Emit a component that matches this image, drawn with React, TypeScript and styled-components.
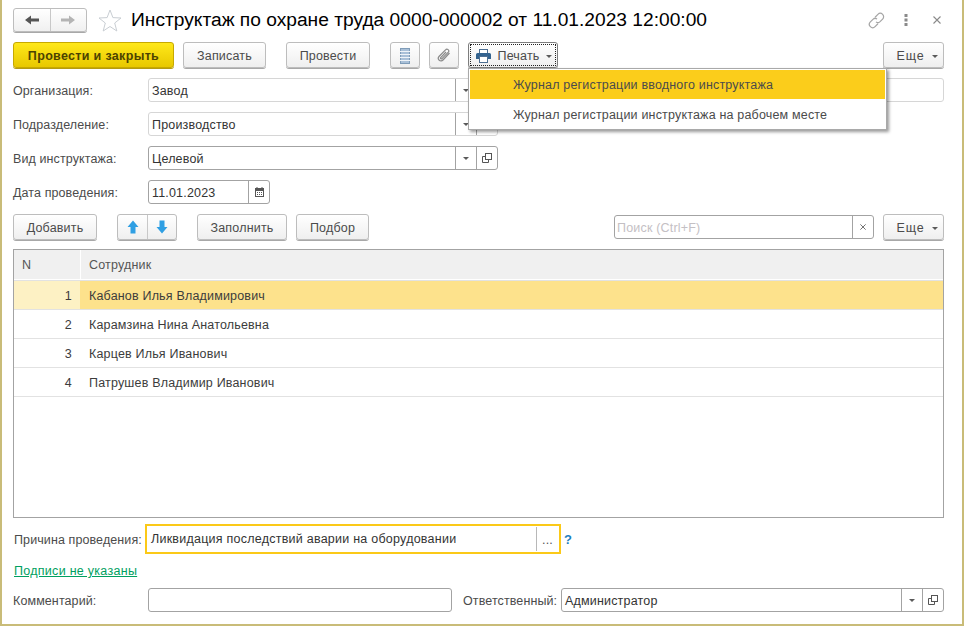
import React from 'react'
import styled, { createGlobalStyle } from 'styled-components'

const Global = createGlobalStyle`
  html, body { margin: 0; padding: 0; background: #fff; }
  body {
    font-family: "Liberation Sans", Arial, sans-serif;
    font-size: 12.5px;
    letter-spacing: 0.18px;
    color: #4b4b4b;
  }
`

const Page = styled.div`
  width: 964px;
  height: 626px;
  box-sizing: border-box;
  border-left: 2px solid #c9bc78;
  border-right: 2px solid #c9bc78;
  border-bottom: 2px solid #c9bc78;
  padding: 8px 18px 0 11px;
  position: relative;
  overflow: hidden;
  background: #fff;
`

const Row = styled.div<{ $top: number; $h?: number }>`
  display: flex;
  align-items: center;
  margin-top: ${(p) => p.$top}px;
  height: ${(p) => p.$h ?? 24}px;
`

const Title = styled.h1`
  margin: 0 0 0 9px;
  font-size: 19.2px;
  font-weight: 400;
  letter-spacing: 0;
  color: #000;
  white-space: nowrap;
  line-height: 24px;
`

const HeadIcons = styled.div`
  margin-left: auto;
  margin-right: 3px;
  display: flex;
  align-items: center;
`

const NavGroup = styled.div`
  display: flex;
  width: 74px;
  height: 24px;
  box-sizing: border-box;
  border: 1px solid #bdbdbd;
  border-radius: 3px;
  box-shadow: 0 1px 0 #a8a8a8;
  background: linear-gradient(#fff, #f0f0f0);
`

const NavCell = styled.div<{ $w: number; $line?: boolean }>`
  width: ${(p) => p.$w}px;
  display: flex;
  align-items: center;
  justify-content: center;
  ${(p) => (p.$line ? 'border-right: 1px solid #c8c8c8;' : '')}
`

const Button = styled.div<{ $w: number; $left?: number; $primary?: boolean; $focus?: boolean; $push?: boolean }>`
  width: ${(p) => p.$w}px;
  height: 26px;
  box-sizing: border-box;
  flex: none;
  margin-left: ${(p) => (p.$push ? 'auto' : `${p.$left ?? 0}px`)};
  padding-top: 1px;
  padding-left: ${(p) => (p.$focus ? 2 : 0)}px;
  display: flex;
  align-items: center;
  justify-content: center;
  gap: 6px;
  border: 1px solid ${(p) => (p.$primary ? '#c7a900' : p.$focus ? '#7d7d7d' : '#bdbdbd')};
  border-radius: 3px;
  box-shadow: 0 1px 0 ${(p) => (p.$primary ? '#b59b10' : '#a8a8a8')};
  background: ${(p) => (p.$primary ? 'linear-gradient(#ffe81a, #e8c800)' : 'linear-gradient(#fff, #efefef)')};
  color: ${(p) => (p.$primary ? '#4c4300' : '#4b4b4b')};
  font-weight: ${(p) => (p.$primary ? 700 : 400)};
  letter-spacing: ${(p) => (p.$primary ? 0.33 : 0.18)}px;
  white-space: nowrap;
  position: relative;
`

const MoreButton = styled(Button)`
  padding-left: 7px;
  gap: 7px;
  letter-spacing: 0.9px;
`

const FocusRing = styled.span`
  position: absolute;
  inset: 1px;
  border: 1px dotted #222;
`

const SplitButton = styled.div<{ $left: number }>`
  width: 60px;
  height: 26px;
  box-sizing: border-box;
  flex: none;
  margin-left: ${(p) => p.$left}px;
  display: flex;
  border: 1px solid #bdbdbd;
  border-radius: 3px;
  box-shadow: 0 1px 0 #a8a8a8;
  background: linear-gradient(#fff, #efefef);
`

const Caret = styled.span`
  width: 0;
  height: 0;
  border-left: 3px solid transparent;
  border-right: 3px solid transparent;
  border-top: 3px solid #5a5a5a;
  margin-top: 1px;
`

const Label = styled.div<{ $w: number; $left?: number }>`
  width: ${(p) => p.$w}px;
  margin-left: ${(p) => p.$left ?? 0}px;
  padding-top: 2px;
  flex: none;
  white-space: nowrap;
  letter-spacing: 0.1px;
`

const Field = styled.div<{ $w: number; $left?: number; $strong?: boolean; $push?: boolean }>`
  width: ${(p) => p.$w}px;
  height: 24px;
  box-sizing: border-box;
  flex: none;
  margin-left: ${(p) => (p.$push ? 'auto' : `${p.$left ?? 0}px`)};
  display: flex;
  border: 1px solid ${(p) => (p.$strong ? '#a3a3a3' : '#d6d6d6')};
  border-radius: 3px;
  background: #fff;
`

const FieldText = styled.div`
  flex: 1;
  padding-left: 3px;
  line-height: 24px;
  color: #333;
  white-space: nowrap;
  overflow: hidden;
`

const Placeholder = styled(FieldText)`
  padding-left: 2px;
  color: #c4c0c4;
`

const FocusedText = styled(FieldText)`
  padding-left: 4px;
  line-height: 26px;
  letter-spacing: 0.24px;
`

const FieldCell = styled.div<{ $w: number }>`
  width: ${(p) => p.$w}px;
  flex: none;
  display: flex;
  align-items: center;
  justify-content: center;
  box-sizing: border-box;
  border-left: 1px solid #a3a3a3;
  color: #555;
`

const Focused = styled.div`
  width: 416px;
  height: 30px;
  box-sizing: border-box;
  flex: none;
  display: flex;
  align-items: center;
  border: 2px solid #fbc918;
  background: #fff;
`

const FocusedCell = styled.div`
  width: 22px;
  height: 24px;
  margin-right: 1px;
  box-sizing: border-box;
  border-left: 1px solid #b8b8b8;
  text-align: center;
  line-height: 26px;
  color: #555;
`

const Help = styled.span`
  margin-left: 3px;
  font-weight: 700;
  font-size: 13px;
  color: #1f7fc0;
`

const Menu = styled.div`
  position: absolute;
  left: 466px;
  top: 68px;
  width: 419px;
  height: 62px;
  box-sizing: border-box;
  border: 1px solid #a9a9a9;
  padding: 1px;
  background: #fff;
  box-shadow: 2px 2px 3px rgba(0, 0, 0, 0.4);
  z-index: 2;
`

const MenuItem = styled.div<{ $active?: boolean }>`
  height: ${(p) => (p.$active ? 29 : 30)}px;
  line-height: ${(p) => (p.$active ? 31 : 32)}px;
  padding-left: 43px;
  background: ${(p) => (p.$active ? '#fbcd1b' : 'transparent')};
  color: #4b4b4b;
  white-space: nowrap;
`

const Table = styled.div`
  margin-top: 9px;
  height: 269px;
  box-sizing: border-box;
  border: 1px solid #a3a3a3;
  background: #fff;
`

const TableHead = styled.div`
  display: flex;
  height: 29px;
  border-bottom: 1px solid #fff;
  box-shadow: 0 1px 0 #e2e2e2;
  margin-bottom: 1px;
`

const HeadCell = styled.div<{ $num?: boolean }>`
  background: #f0f0f0;
  line-height: 31px;
  box-sizing: border-box;
  ${(p) => (p.$num ? 'width: 66px; padding-left: 8px; margin-right: 1px;' : 'flex: 1; padding-left: 8px;')}
  color: #555;
`

const TableRow = styled.div<{ $active?: boolean }>`
  display: flex;
  height: 28px;
  margin-bottom: 1px;
  box-shadow: 0 1px 0 #e2e2e2;
  line-height: 30px;
  color: #3c3c3c;
  background: ${(p) => (p.$active ? '#fde28c' : '#fff')};
`

const NumCell = styled.div<{ $active?: boolean }>`
  width: 66px;
  margin-right: 1px;
  box-sizing: border-box;
  padding-right: 8px;
  text-align: right;
  background: ${(p) => (p.$active ? '#fdf1c4' : 'transparent')};
`

const NameCell = styled.div`
  flex: 1;
  padding-left: 8px;
`

const SignLink = styled.a`
  margin-left: 1px;
  padding-top: 2px;
  color: #00a060;
  text-decoration: underline;
  letter-spacing: 0.28px;
`

const IconBox = styled.svg<{ $left?: number }>`
  display: block;
  flex: none;
  margin-left: ${(p) => p.$left ?? 0}px;
`

const ArrowLeft = () => (
  <svg width="14" height="10" viewBox="0 0 14 10">
    <path d="M0 5 L6 0.5 V3.5 H14 V6.5 H6 V9.5 Z" fill="#555" />
  </svg>
)

const ArrowRight = () => (
  <svg width="14" height="10" viewBox="0 0 14 10">
    <path d="M14 5 L8 0.5 V3.5 H0 V6.5 H8 V9.5 Z" fill="#b4b4b4" />
  </svg>
)

const Star = () => (
  <IconBox $left={11} width="24" height="23" viewBox="0 0 24 23">
    <path
      d="M12 1 L14.9 8.6 L23 9 L16.7 14 L18.8 22 L12 17.5 L5.2 22 L7.3 14 L1 9 L9.1 8.6 Z"
      fill="#fff"
      stroke="#c9ced3"
    />
  </IconBox>
)

const LinkIcon = () => (
  <svg width="17" height="17" viewBox="0 0 18 18" fill="none" stroke="#a5a5a5" strokeWidth="1.3">
    <path d="M7.5 5.5 L10.5 2.5 a3 3 0 0 1 5 5 L12.5 10.5 a3 3 0 0 1 -4 0" />
    <path d="M10.5 12.5 L7.5 15.5 a3 3 0 0 1 -5 -5 L5.5 7.5 a3 3 0 0 1 4 0" />
  </svg>
)

const Dots = () => (
  <IconBox $left={19} width="4" height="12" viewBox="0 0 4 12">
    <rect x="0.5" y="0" width="3" height="3" fill="#8a8a8a" />
    <rect x="0.5" y="4.5" width="3" height="3" fill="#8a8a8a" />
    <rect x="0.5" y="9" width="3" height="3" fill="#8a8a8a" />
  </IconBox>
)

const Cross = ({ left = 0, size = 8, color = '#8a8a8a' }: { left?: number; size?: number; color?: string }) => (
  <IconBox $left={left} width={size} height={size} viewBox="0 0 8 8">
    <path d="M0.5 0.5 L7.5 7.5 M7.5 0.5 L0.5 7.5" stroke={color} strokeWidth="1.1" />
  </IconBox>
)

const ListIcon = () => (
  <svg width="10" height="16" viewBox="0 0 10 16">
    <rect x="0.5" y="0.5" width="9" height="15" fill="#a9c0d8" stroke="#7f9cb8" />
    <path d="M0 3.5 H10 M0 6.5 H10 M0 9.5 H10 M0 12.5 H10" stroke="#eef3f8" strokeWidth="1" />
  </svg>
)

const ClipIcon = () => (
  <svg width="14" height="15" viewBox="0 0 14 15" fill="none" stroke="#8a8a8a" strokeWidth="1.2">
    <path d="M12.5 5 L6 12 a2.6 2.6 0 0 1 -4 -3.5 L8.5 1.8 a1.8 1.8 0 0 1 2.8 2.4 L5 10.6 a0.8 0.8 0 0 1 -1.3 -1 L9 4" />
  </svg>
)

const PrinterIcon = () => (
  <svg width="15" height="14" viewBox="0 0 15 14">
    <rect x="3.5" y="0.5" width="8" height="4" fill="#fff" stroke="#4e6f92" />
    <path d="M1.5 4 H13.5 A1.5 1.5 0 0 1 15 5.5 V10 H0 V5.5 A1.5 1.5 0 0 1 1.5 4 Z" fill="#33638f" />
    <rect x="3.5" y="7.5" width="8" height="6" fill="#fff" stroke="#4e6f92" />
  </svg>
)

const UpArrow = () => (
  <svg width="12" height="14" viewBox="0 0 12 14">
    <path d="M6 0.5 L11.5 7 H8.5 V13.5 H3.5 V7 H0.5 Z" fill="#2f9fe3" />
  </svg>
)

const DownArrow = () => (
  <svg width="12" height="14" viewBox="0 0 12 14">
    <path d="M6 13.5 L11.5 7 H8.5 V0.5 H3.5 V7 H0.5 Z" fill="#2f9fe3" />
  </svg>
)

const OpenIcon = () => (
  <svg width="10" height="10" viewBox="0 0 10 10" fill="none" stroke="#555">
    <rect x="3.5" y="0.5" width="6" height="6" />
    <path d="M3.5 3.5 H0.5 V9.5 H6.5 V6.5" />
  </svg>
)

const CalendarIcon = () => (
  <svg width="9" height="10" viewBox="0 0 9 10">
    <rect x="0.5" y="1.5" width="8" height="8" fill="#fff" stroke="#555" />
    <rect x="0" y="1" width="9" height="3" fill="#555" />
    <path d="M2 0 V2 M7 0 V2" stroke="#555" />
    <path d="M2 5.5 H3 M4 5.5 H5 M6 5.5 H7 M2 7.5 H3 M4 7.5 H5 M6 7.5 H7" stroke="#555" />
  </svg>
)

const SelectField = ({ w, text, strong, open = true }: { w: number; text: string; strong?: boolean; open?: boolean }) => (
  <Field $w={w} $strong={strong}>
    <FieldText>{text}</FieldText>
    <FieldCell $w={21}>
      <Caret />
    </FieldCell>
    {open && (
      <FieldCell $w={21}>
        <OpenIcon />
      </FieldCell>
    )}
  </Field>
)

const people = [
  'Кабанов Илья Владимирович',
  'Карамзина Нина Анатольевна',
  'Карцев Илья Иванович',
  'Патрушев Владимир Иванович',
]

export default function App() {
  return (
    <Page>
      <Global />
      <Row $top={0}>
        <NavGroup>
          <NavCell $w={36} $line>
            <ArrowLeft />
          </NavCell>
          <NavCell $w={36}>
            <ArrowRight />
          </NavCell>
        </NavGroup>
        <Star />
        <Title>Инструктаж по охране труда 0000-000002 от 11.01.2023 12:00:00</Title>
        <HeadIcons>
          <LinkIcon />
          <Dots />
          <Cross left={25} />
        </HeadIcons>
      </Row>

      <Row $top={10} $h={26}>
        <Button $w={161} $primary>
          Провести и закрыть
        </Button>
        <Button $w={83} $left={9}>
          Записать
        </Button>
        <Button $w={84} $left={20}>
          Провести
        </Button>
        <Button $w={30} $left={20}>
          <ListIcon />
        </Button>
        <Button $w={30} $left={9}>
          <ClipIcon />
        </Button>
        <Button $w={90} $left={9} $focus>
          <FocusRing />
          <PrinterIcon />
          Печать
          <Caret />
        </Button>
        <MoreButton $w={61} $push>
          Еще
          <Caret />
        </MoreButton>
      </Row>

      <Row $top={10}>
        <Label $w={135}>Организация:</Label>
        <SelectField w={350} text="Завод" />
        <Field $w={300} $push />
      </Row>
      <Row $top={10}>
        <Label $w={135}>Подразделение:</Label>
        <SelectField w={350} text="Производство" />
      </Row>
      <Row $top={10}>
        <Label $w={135}>Вид инструктажа:</Label>
        <SelectField w={350} text="Целевой" strong />
      </Row>
      <Row $top={10}>
        <Label $w={135}>Дата проведения:</Label>
        <Field $w={122} $strong>
          <FieldText>11.01.2023</FieldText>
          <FieldCell $w={21}>
            <CalendarIcon />
          </FieldCell>
        </Field>
      </Row>

      <Row $top={10} $h={26}>
        <Button $w={84}>Добавить</Button>
        <SplitButton $left={20}>
          <NavCell $w={30} $line>
            <UpArrow />
          </NavCell>
          <NavCell $w={28}>
            <DownArrow />
          </NavCell>
        </SplitButton>
        <Button $w={90} $left={20}>
          Заполнить
        </Button>
        <Button $w={73} $left={9}>
          Подбор
        </Button>
        <Field $w={260} $strong $push>
          <Placeholder>Поиск (Ctrl+F)</Placeholder>
          <FieldCell $w={21}>
            <Cross size={6} color="#555" />
          </FieldCell>
        </Field>
        <MoreButton $w={61} $left={9}>
          Еще
          <Caret />
        </MoreButton>
      </Row>

      <Table>
        <TableHead>
          <HeadCell $num>N</HeadCell>
          <HeadCell>Сотрудник</HeadCell>
        </TableHead>
        {people.map((name, i) => (
          <TableRow key={name} $active={i === 0}>
            <NumCell $active={i === 0}>{i + 1}</NumCell>
            <NameCell>{name}</NameCell>
          </TableRow>
        ))}
      </Table>

      <Row $top={6} $h={30}>
        <Label $w={131} $left={1}>
          Причина проведения:
        </Label>
        <Focused>
          <FocusedText>Ликвидация последствий аварии на оборудовании</FocusedText>
          <FocusedCell>...</FocusedCell>
        </Focused>
        <Help>?</Help>
      </Row>

      <Row $top={9} $h={14}>
        <SignLink>Подписи не указаны</SignLink>
      </Row>

      <Row $top={11}>
        <Label $w={135}>Комментарий:</Label>
        <Field $w={304} $strong />
        <Label $w={98} $left={11}>
          Ответственный:
        </Label>
        <SelectField w={383} text="Администратор" strong />
      </Row>

      <Menu>
        <MenuItem $active>Журнал регистрации вводного инструктажа</MenuItem>
        <MenuItem>Журнал регистрации инструктажа на рабочем месте</MenuItem>
      </Menu>
    </Page>
  )
}
